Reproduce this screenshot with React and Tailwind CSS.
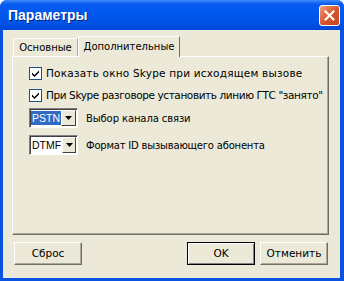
import { useState } from 'react';

function CheckRow({ label, top, track }) {
  return (
    <div className={`flex items-center whitespace-nowrap ${top}`}>
      <div className="w-[13px] h-[13px] bg-white border border-[#1c5180] flex items-center justify-center shrink-0">
        <svg width="9" height="9" viewBox="0 0 9 9">
          <path d="M1 3.5 L3.5 6 L8 1.5 L8 3.5 L3.5 8 L1 5.5 Z" fill="#000" />
        </svg>
      </div>
      <span className={`ml-[4px] leading-[13px] text-[10.5px] ${track}`}>{label}</span>
    </div>
  );
}

function Combo({ value, selected }) {
  return (
    <div
      className="w-[49px] h-[20px] bg-white border-t border-l border-t-[#808080] border-l-[#808080] border-b border-r border-b-white border-r-white flex items-center shrink-0 shadow-[inset_1px_1px_0_#404040] text-[10.5px]"
      style={{ fontFamily: '"Liberation Sans", sans-serif' }}
    >
      <span
        className={`ml-[1px] px-[1px] leading-[14px] ${selected ? 'bg-[#316ac5] text-white' : 'text-black'}`}
      >
        {value}
      </span>
      <div className="ml-auto mr-[1px] w-[16px] h-[16px] bg-[#ece9d8] border-t border-l border-white border-b border-r border-b-[#404040] border-r-[#404040] flex items-center justify-center">
        <svg width="7" height="4" viewBox="0 0 7 4">
          <path d="M0 0 H7 L3.5 4 Z" fill="#000" />
        </svg>
      </div>
    </div>
  );
}

function Button({ children, isDefault }) {
  return (
    <div
      className={`w-[68px] h-[23px] flex items-center justify-center bg-[#ece9d8] ${
        isDefault
          ? 'border border-black shadow-[inset_1px_1px_0_#fff,inset_-1px_-1px_0_#808080]'
          : 'border-t border-l border-white border-b border-r border-b-[#716f64] border-r-[#716f64] shadow-[inset_-1px_-1px_0_#aca899]'
      }`}
    >
      {children}
    </div>
  );
}

export default function App() {
  const [tab] = useState('extra');

  return (
    <div
      className="w-[344px] h-[281px] bg-[#0a52e0] rounded-t-[7px] flex flex-col overflow-hidden text-[10.5px] text-black"
      style={{ fontFamily: '"DejaVu Sans", sans-serif' }}
    >
      {/* Title bar */}
      <div className="h-[30px] shrink-0 flex items-center relative bg-[linear-gradient(to_bottom,#3d8cf8_0px,#0a5cf0_4px,#0058ee_12px,#0055e8_22px,#0047d6_30px)]">
        <span
          className="ml-[8px] text-white font-bold text-[14px] [text-shadow:1px_1px_0_#0a1e8a]"
          style={{ fontFamily: '"Liberation Sans", sans-serif' }}
        >
          Параметры
        </span>
        <div className="absolute left-[319px] top-[5px] w-[21px] h-[21px] rounded-[3px] border border-white bg-[linear-gradient(135deg,#f0a080,#d8582c_50%,#c2421f)] flex items-center justify-center">
          <svg width="11" height="11" viewBox="0 0 11 11">
            <path d="M1.5 1.5 L9.5 9.5 M9.5 1.5 L1.5 9.5" stroke="#fff" strokeWidth="2" strokeLinecap="square" />
          </svg>
        </div>
      </div>

      {/* Client area */}
      <div className="flex-1 ml-[3px] mr-[4px] mb-[3px] bg-[#ece9d8] flex flex-col">
        {/* Tabs */}
        <div className="mt-[6px] ml-[9px] flex items-end h-[21px] relative z-10 -mb-[1px] text-[10px]">
          <div className="ml-[1px] w-[65px] h-[18px] flex items-center justify-center border-t border-l border-white border-r border-r-[#aca899] mb-[1px]">
            Основные
          </div>
          <div
            className={`w-[102px] h-[21px] flex items-center justify-center bg-[#ece9d8] border-t border-l border-white border-r border-r-[#716f64] ${
              tab === 'extra' ? 'pb-[2px]' : ''
            }`}
          >
            Дополнительные
          </div>
        </div>

        {/* Panel */}
        <div className="ml-[9px] w-[317px] h-[179px] border-t border-l border-white border-r border-b border-r-[#716f64] border-b-[#716f64] shadow-[inset_-1px_-1px_0_#aca899] pl-[16px]">
          <CheckRow top="mt-[10px]" track="tracking-[0.2px]" label="Показать окно Skype при исходящем вызове" />
          <CheckRow top="mt-[9px]" track="tracking-[-0.4px]" label={'При Skype разговоре установить линию ГТС "занято"'} />
          <div className="mt-[6px] flex items-center">
            <Combo value="PSTN" selected />
            <span className="ml-[8px] text-[10px] tracking-[-0.1px]">Выбор канала связи</span>
          </div>
          <div className="mt-[7px] flex items-center">
            <Combo value="DTMF" />
            <span className="ml-[8px] text-[10px] tracking-[-0.2px]">Формат ID вызывающего абонента</span>
          </div>
        </div>

        {/* Buttons */}
        <div className="mt-[7px] ml-[11px] mr-[12px] flex items-center">
          <Button>Сброс</Button>
          <div className="ml-auto flex gap-[5px]">
            <Button isDefault>OK</Button>
            <Button>Отменить</Button>
          </div>
        </div>
      </div>
    </div>
  );
}
